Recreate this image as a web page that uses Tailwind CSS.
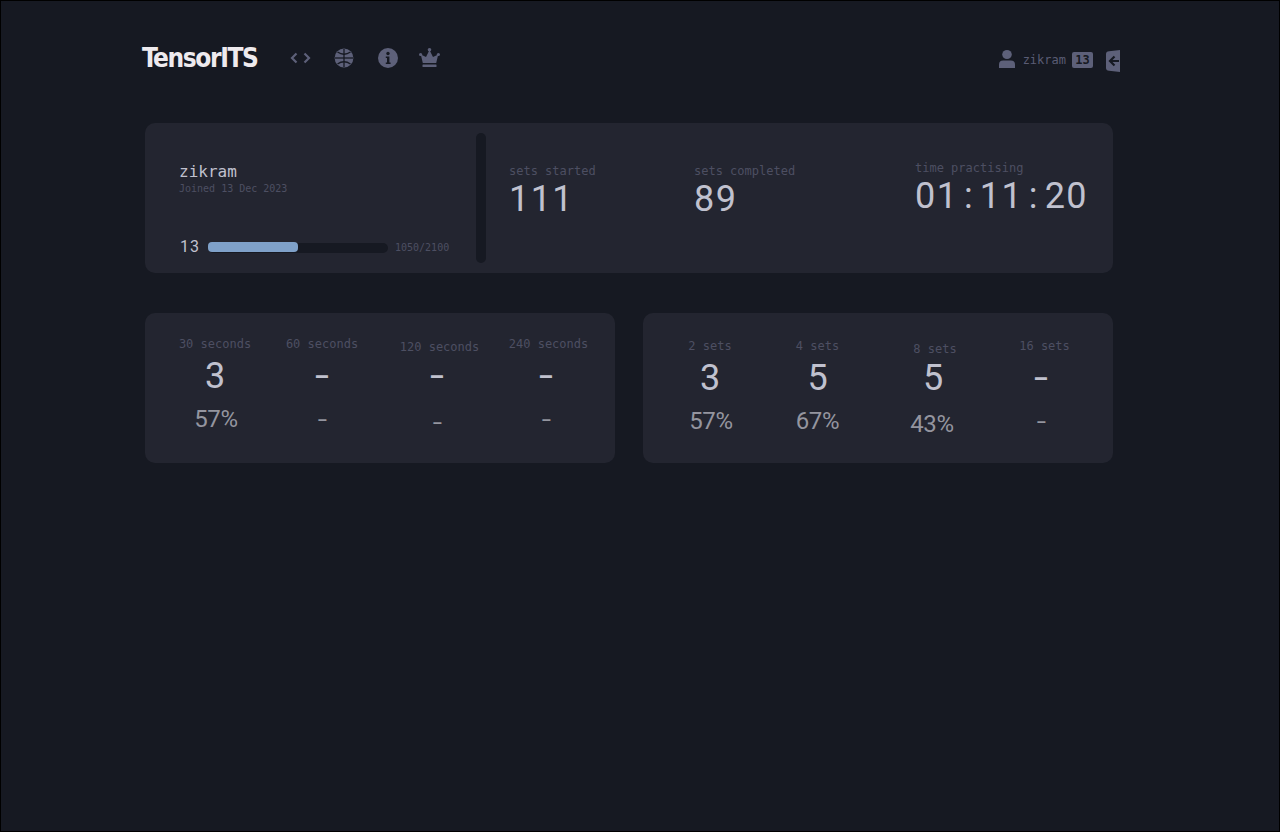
<!DOCTYPE html>
<html><head><meta charset="utf-8"><script src="https://cdn.jsdelivr.net/npm/@tailwindcss/browser@4"></script></head>
<body class="m-0">
<div class="w-[1280px] h-[832px] overflow-hidden bg-[#161922] border border-black font-['DejaVu_Sans_Mono',monospace] text-[#c0c1ce]">
  <header class="flex items-center h-[28px] mt-[43px] ml-[140px] w-[979px] relative">
    <span class="font-['DejaVu_Sans',sans-serif] font-stretch-condensed font-bold text-[26px] leading-[28px] text-[#eeeaee] w-[148px] pl-[1px] tracking-[-1.4px]">TensorITS</span>
    <svg class="w-[22px] h-[16px] text-[#5d6079]" viewBox="0 0 22 16" fill="none" stroke="currentColor" stroke-width="2.2"><path d="M7.5 3.5 L3 8 L7.5 12.5"/><path d="M15.5 3.5 L20 8 L15.5 12.5"/></svg>
    <svg class="w-[20px] h-[20px] text-[#5d6079] ml-[23px]" viewBox="0 0 20 20" fill="currentColor"><circle cx="10" cy="10" r="9.4"/><g fill="none" stroke="#161922" stroke-width="1.3"><path d="M1 10H19"/><path d="M10 1V19"/><path d="M3.5 4Q10 8.5 16.5 4"/><path d="M3.5 16Q10 11.5 16.5 16"/></g></svg>
    <svg class="w-[20px] h-[20px] text-[#5d6079] ml-[24px]" viewBox="0 0 20 20"><circle cx="10" cy="10" r="10" fill="currentColor"/><circle cx="10" cy="5.5" r="1.7" fill="#161922"/><path d="M7.8 8.5H11.4V14.4H12.6V16H7.8V14.4H9V10.1H7.8Z" fill="#161922"/></svg>
    <svg class="w-[21px] h-[20px] text-[#5d6079] ml-[21px]" viewBox="0 0 21 20" fill="currentColor"><circle cx="10.5" cy="1.8" r="1.8"/><circle cx="1.6" cy="6.5" r="1.6"/><circle cx="19.4" cy="6.5" r="1.6"/><path d="M10.5 2 L14 9 L19.2 6.5 L17.2 15 H3.8 L1.8 6.5 L7 9Z"/><rect x="3.5" y="16.5" width="14" height="2.5" rx=".5"/></svg>
    <div class="ml-auto flex items-center mt-[4px]">
      <svg class="w-[16px] h-[18px] mb-[2px] text-[#5d6079]" viewBox="0 0 15 18" preserveAspectRatio="none" fill="currentColor"><circle cx="7.5" cy="4.5" r="4.5"/><path d="M0 18V14.5Q0 10.5 4 10.5H11Q15 10.5 15 14.5V18Z"/></svg>
      <span class="ml-[8px] text-[12px] text-[#5a5c74]">zikram</span>
      <span class="ml-[6px] w-[21px] h-[16px] rounded-[2px] bg-[#5d6079] text-[#161922] text-[12px] font-bold flex items-center justify-center">13</span>
      <svg class="ml-[13px] mt-[1px] w-[14px] h-[22px] text-[#5d6079]" viewBox="0 0 14 22"><path d="M3 1.2 L14 0 V22 L3 20.8 Q0 20.5 0 18 V4 Q0 1.5 3 1.2Z" fill="currentColor"/><path d="M13 11H4.5M8.5 6.5L4 11L8.5 15.5" stroke="#161922" stroke-width="2.2" fill="none"/></svg>
    </div>
  </header>
  <main class="ml-[144px] w-[968px] mt-[51px]">
    <section class="h-[150px] rounded-[10px] bg-[#232530] flex relative">
      <div class="w-[331px] pl-[34px] pt-[41px] flex flex-col">
        <div class="text-[16px] leading-[16px]">zikram</div>
        <div class="mt-[2px] text-[10px] leading-[14px] text-[#4d4f62]">Joined 13 Dec 2023</div>
        <div class="flex items-center mt-[41px] pl-[1px] h-[20px]">
          <span class="text-[16px] w-[28px] font-['Roboto',sans-serif] tracking-[1px]">13</span>
          <div class="w-[180px] h-[10px] mt-[2px] rounded-[5px] bg-[#161922] relative"><div class="absolute left-0 -top-[1px] h-[10px] w-[90px] rounded-[4px] bg-[#7fa1c9]"></div></div>
          <span class="ml-[7px] text-[10px] text-[#4d4f62]">1050/2100</span>
        </div>
      </div>
      <div class="w-[10px] h-[130px] mt-[10px] rounded-[5px] bg-[#161922]"></div>
      <div class="ml-[23px] w-[185px] pt-[41px]">
        <div class="text-[12px] leading-[14px] text-[#4d4f62]">sets started</div>
        <div class="mt-[1px] text-[36px] leading-[40px] font-['Roboto',sans-serif] tracking-[1.4px]">111</div>
      </div>
      <div class="w-[221px] pt-[41px]">
        <div class="text-[12px] leading-[14px] text-[#4d4f62]">sets completed</div>
        <div class="mt-[1px] text-[36px] leading-[40px] font-['Roboto',sans-serif] tracking-[1.4px]">89</div>
      </div>
      <div class="pt-[38px]">
        <div class="text-[12px] leading-[14px] text-[#4d4f62]">time practising</div>
        <div class="mt-[1px] text-[36px] leading-[40px] font-['Roboto',sans-serif] tracking-[1.4px]">01<span class="inline-block w-[21.6px] text-center">:</span>11<span class="inline-block w-[21.6px] text-center">:</span>20</div>
      </div>
    </section>
    <div class="flex gap-[28px] mt-[40px]">
      <section class="w-[470px] h-[150px] rounded-[10px] bg-[#232530] flex pl-[34px] font-['Roboto',sans-serif]">
        <div class="w-[72px] pt-[24px] flex flex-col items-center">
          <div class="font-['DejaVu_Sans_Mono',monospace] text-[12px] leading-[14px] text-[#4d4f62] whitespace-nowrap">30 seconds</div>
          <div class="text-[36px] leading-[50px]">3</div>
          <div class="text-[24px] leading-[36px] text-[#94959f] tracking-[-0.3px] ml-[2px]">57%</div>
        </div>
        <div class="w-[72px] ml-[35px] pt-[24px] flex flex-col items-center">
          <div class="font-['DejaVu_Sans_Mono',monospace] text-[12px] leading-[14px] text-[#4d4f62] whitespace-nowrap">60 seconds</div>
          <div class="text-[36px] leading-[50px] scale-x-[1.4]">-</div>
          <div class="text-[24px] leading-[36px] text-[#94959f] scale-x-[1.4]">-</div>
        </div>
        <div class="w-[79px] ml-[42px] pt-[27px] flex flex-col items-center">
          <div class="font-['DejaVu_Sans_Mono',monospace] text-[12px] leading-[14px] text-[#4d4f62] whitespace-nowrap">120 seconds</div>
          <div class="text-[36px] leading-[50px] -mt-[3px] mr-[5px] scale-x-[1.4]">-</div>
          <div class="text-[24px] leading-[36px] mt-[3px] mr-[5px] text-[#94959f] scale-x-[1.4]">-</div>
        </div>
        <div class="w-[79px] ml-[30px] pt-[24px] flex flex-col items-center">
          <div class="font-['DejaVu_Sans_Mono',monospace] text-[12px] leading-[14px] text-[#4d4f62] whitespace-nowrap">240 seconds</div>
          <div class="text-[36px] leading-[50px] mr-[6px] scale-x-[1.4]">-</div>
          <div class="text-[24px] leading-[36px] mr-[5px] text-[#94959f] scale-x-[1.4]">-</div>
        </div>
      </section>
      <section class="w-[470px] h-[150px] rounded-[10px] bg-[#232530] flex pl-[31px] font-['Roboto',sans-serif]">
        <div class="w-[72px] pt-[26px] flex flex-col items-center">
          <div class="font-['DejaVu_Sans_Mono',monospace] text-[12px] leading-[14px] text-[#4d4f62] whitespace-nowrap">2 sets</div>
          <div class="text-[36px] leading-[50px]">3</div>
          <div class="text-[24px] leading-[36px] text-[#94959f] tracking-[-0.3px] ml-[2px]">57%</div>
        </div>
        <div class="w-[73px] ml-[35px] pt-[26px] flex flex-col items-center">
          <div class="font-['DejaVu_Sans_Mono',monospace] text-[12px] leading-[14px] text-[#4d4f62] whitespace-nowrap">4 sets</div>
          <div class="text-[36px] leading-[50px]">5</div>
          <div class="text-[24px] leading-[36px] text-[#94959f] tracking-[-0.3px]">67%</div>
        </div>
        <div class="w-[72px] ml-[45px] pt-[29px] flex flex-col items-center">
          <div class="font-['DejaVu_Sans_Mono',monospace] text-[12px] leading-[14px] text-[#4d4f62] whitespace-nowrap">8 sets</div>
          <div class="text-[36px] leading-[50px] -mt-[3px] mr-[4px]">5</div>
          <div class="text-[24px] leading-[36px] mt-[3px] mr-[6px] text-[#94959f] tracking-[-0.3px]">43%</div>
        </div>
        <div class="w-[73px] ml-[37px] pt-[26px] flex flex-col items-center">
          <div class="font-['DejaVu_Sans_Mono',monospace] text-[12px] leading-[14px] text-[#4d4f62] whitespace-nowrap">16 sets</div>
          <div class="text-[36px] leading-[50px] mr-[8px] scale-x-[1.4]">-</div>
          <div class="text-[24px] leading-[36px] mr-[7px] text-[#94959f] scale-x-[1.4]">-</div>
        </div>
      </section>
    </div>
  </main>
</div>
</body></html>
